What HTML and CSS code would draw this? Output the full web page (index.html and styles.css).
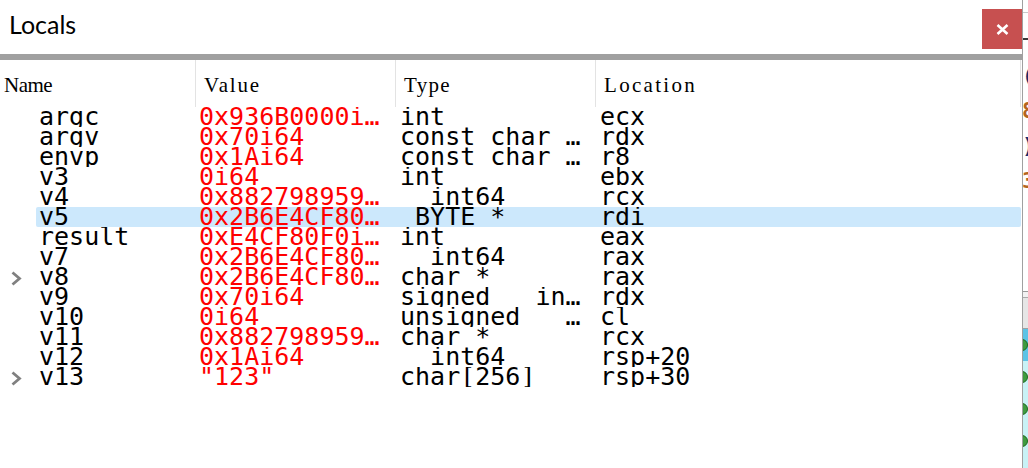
FILE: index.html
```html
<!DOCTYPE html>
<html>
<head>
<meta charset="utf-8">
<link rel="stylesheet" href="styles.css">
</head>
<body>
<div class="desktop">
  <div class="win">
    <div class="titlebar">
      <span class="title">Locals</span>
      <div class="close"><svg width="13" height="11" viewBox="0 0 13 11"><path d="M1.5 1 L11.5 10 M11.5 1 L1.5 10" stroke="#fff" stroke-width="2.6" fill="none"/></svg></div>
    </div>
    <div class="divider"></div>
    <div class="head">
      <div class="hcell h-name">Name</div>
      <div class="hcell h-value">Value</div>
      <div class="hcell h-type">Type</div>
      <div class="hcell h-loc">Location</div>
    </div>
    <div class="rows">
      <div class="row"><div class="twisty"></div><div class="cells"><div class="c name">argc</div><div class="c val">0x936B0000i64</div><div class="c">int</div><div class="c">ecx</div></div></div>
      <div class="row"><div class="twisty"></div><div class="cells"><div class="c name">argv</div><div class="c val">0x70i64</div><div class="c">const char **</div><div class="c">rdx</div></div></div>
      <div class="row"><div class="twisty"></div><div class="cells"><div class="c name">envp</div><div class="c val">0x1Ai64</div><div class="c">const char **</div><div class="c">r8</div></div></div>
      <div class="row"><div class="twisty"></div><div class="cells"><div class="c name">v3</div><div class="c val">0i64</div><div class="c">int</div><div class="c">ebx</div></div></div>
      <div class="row"><div class="twisty"></div><div class="cells"><div class="c name">v4</div><div class="c val">0x8827989590i64</div><div class="c">__int64</div><div class="c">rcx</div></div></div>
      <div class="row sel"><div class="twisty"></div><div class="cells"><div class="c name">v5</div><div class="c val">0x2B6E4CF8000i64</div><div class="c">_BYTE *</div><div class="c">rdi</div></div></div>
      <div class="row"><div class="twisty"></div><div class="cells"><div class="c name">result</div><div class="c val">0xE4CF80F0i64</div><div class="c">int</div><div class="c">eax</div></div></div>
      <div class="row"><div class="twisty"></div><div class="cells"><div class="c name">v7</div><div class="c val">0x2B6E4CF8000i64</div><div class="c">__int64</div><div class="c">rax</div></div></div>
      <div class="row"><div class="twisty"><svg width="36" height="20" viewBox="0 0 36 20"><polyline points="12.5,5.5 19.5,11.5 12.5,17.5" fill="none" stroke="#808080" stroke-width="2.8"/></svg></div><div class="cells"><div class="c name">v8</div><div class="c val">0x2B6E4CF8000i64</div><div class="c">char *</div><div class="c">rax</div></div></div>
      <div class="row"><div class="twisty"></div><div class="cells"><div class="c name">v9</div><div class="c val">0x70i64</div><div class="c">signed __int64</div><div class="c">rdx</div></div></div>
      <div class="row"><div class="twisty"></div><div class="cells"><div class="c name">v10</div><div class="c val">0i64</div><div class="c">unsigned __int8</div><div class="c">cl</div></div></div>
      <div class="row"><div class="twisty"></div><div class="cells"><div class="c name">v11</div><div class="c val">0x8827989590i64</div><div class="c">char *</div><div class="c">rcx</div></div></div>
      <div class="row"><div class="twisty"></div><div class="cells"><div class="c name">v12</div><div class="c val">0x1Ai64</div><div class="c">__int64</div><div class="c">rsp+20</div></div></div>
      <div class="row"><div class="twisty"><svg width="36" height="20" viewBox="0 0 36 20"><polyline points="12.5,5.5 19.5,11.5 12.5,17.5" fill="none" stroke="#808080" stroke-width="2.8"/></svg></div><div class="cells"><div class="c name">v13</div><div class="c val">"123"</div><div class="c">char[256]</div><div class="c">rsp+30</div></div></div>
    </div>
  </div>
  <div class="sliver">
    <div class="s-gap12"></div>
    <div class="s-line-light"></div>
    <div class="s-gap25"></div>
    <div class="s-line-dark"></div>
    <div class="s-gap18"></div>
    <div class="s-code">
      <div class="s-cl"><span class="k-blue">(</span></div>
      <div class="s-cl"><span class="k-orange">8</span></div>
      <div class="s-cl"><span class="k-blue">)</span></div>
      <div class="s-cl"><span class="k-orange">3</span></div>
    </div>
    <div class="s-gap93"></div>
    <div class="s-tabs">
      <div class="s-tabtop"></div>
      <div class="s-tabbar"></div>
    </div>
    <div class="s-item s-item-sel"><span class="dot"></span></div>
    <div class="s-list">
      <div class="s-item"><span class="dot"></span></div>
      <div class="s-item"><span class="dot"></span></div>
      <div class="s-item"><span class="dot"></span></div>
    </div>
  </div>
</div>
</body>
</html>
```

FILE: styles.css
```css
html, body {
  margin: 0;
  padding: 0;
  background: #fff;
}

.desktop {
  display: flex;
  width: 1028px;
  height: 468px;
  overflow: hidden;
}

.win {
  width: 1022px;
  flex: none;
  border-right: 1px solid #a0a0a0;
  background: #fff;
  display: flex;
  flex-direction: column;
}

.titlebar {
  height: 54px;
  flex: none;
  display: flex;
  justify-content: space-between;
  align-items: flex-start;
}

.title {
  font-family: Lato, "Open Sans", sans-serif;
  font-size: 25px;
  line-height: 30px;
  padding: 9px 0 0 9px;
  color: #000;
}

.close {
  margin-top: 9px;
  width: 40px;
  height: 40px;
  background: #c75050;
  display: flex;
  align-items: center;
  justify-content: center;
}

.divider {
  height: 6px;
  flex: none;
  background: #a0a0a0;
}

.head {
  display: grid;
  grid-template-columns: 196px 200px 200px 1fr;
  height: 47px;
  flex: none;
}

.hcell {
  border-right: 1px solid #e3e3e3;
  padding: 14px 0 0 8px;
  font-family: "Liberation Serif", serif;
  font-size: 21px;
  line-height: 22px;
  color: #000;
}

.h-name { padding-left: 4px; letter-spacing: -0.5px; }
.h-value { letter-spacing: 1.8px; }
.h-type { letter-spacing: 1.3px; }
.h-loc { letter-spacing: 2.3px; margin-right: 1px; }

.rows {
  display: flex;
  flex-direction: column;
}

.row {
  display: flex;
  height: 20px;
}

.twisty {
  width: 36px;
  flex: none;
  height: 20px;
}

.twisty svg {
  display: block;
}

.cells {
  flex: 1;
  display: grid;
  grid-template-columns: 164px 200px 200px 1fr;
  margin-right: 1px;
  border-radius: 2px;
}

.row.sel .cells {
  background: #cce8fc;
}

.c {
  overflow: hidden;
  white-space: pre;
  text-overflow: ellipsis;
  font-family: "DejaVu Sans Mono", monospace;
  font-size: 25px;
  line-height: 20px;
  height: 20px;
  padding-right: 12px;
  color: #000;
}

.c.name {
  padding-left: 3px;
}

.c.val {
  color: #ff0000;
  margin-left: -1px;
}

/* neighbouring window sliver */
.sliver {
  flex: 1;
  display: flex;
  flex-direction: column;
  overflow: hidden;
  background: #fff;
}

.s-gap12 { height: 12px; }
.s-gap25 { height: 25px; }
.s-gap18 { height: 18px; }
.s-gap93 { height: 93px; }
.s-line-light { height: 1px; background: #c8c8c8; }
.s-line-dark { height: 2px; background: #3a3a3a; }

.s-code {
  height: 140px;
  font-family: "DejaVu Sans Mono", monospace;
  font-size: 22px;
  font-weight: bold;
  line-height: 35px;
}

.s-cl {
  height: 35px;
  margin-left: -1px;
  white-space: pre;
}

.k-blue { color: #1a2a6a; }
.k-orange { color: #b5651d; }

.s-tabs {
  height: 37px;
  border-top: 1px solid #999;
  display: flex;
  flex-direction: column;
}

.s-tabtop {
  height: 5px;
  background: #f2f2f2;
  border-bottom: 1px solid #aaa;
}

.s-tabbar {
  flex: 1;
  background: #e6e6e6;
  border-bottom: 1px solid #a0a0a0;
}

.s-item {
  height: 32px;
  display: flex;
  align-items: center;
}

.s-item-sel {
  background: #5cc3e6;
}

.s-list {
  flex: 1;
  background: #c8f2f6;
}

.dot {
  width: 10px;
  height: 10px;
  border-radius: 50%;
  background: #3f9a3f;
  border: 1px solid #1f6a1f;
  margin-left: -7px;
  flex: none;
}
```
